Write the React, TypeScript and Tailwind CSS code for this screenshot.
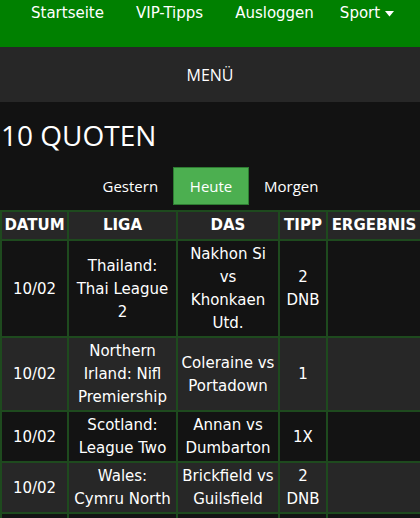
import React from "react";

const rows = [
  { d: "10/02", l: "Thailand: Thai League 2", m: "Nakhon Si vs Khonkaen Utd.", t: "2 DNB", bg: "bg-[#131313]" },
  { d: "10/02", l: "Northern Irland: Nifl Premiership", m: "Coleraine vs Portadown", t: "1", bg: "bg-[#272727]" },
  { d: "10/02", l: "Scotland: League Two", m: "Annan vs Dumbarton", t: "1X", bg: "bg-[#131313]" },
  { d: "10/02", l: "Wales: Cymru North", m: "Brickfield vs Guilsfield", t: "2 DNB", bg: "bg-[#272727]" },
];

export default function App() {
  const dv = { fontFamily: '"DejaVu Sans", Verdana, sans-serif' };
  const os = { fontFamily: '"Open Sans", "Noto Sans", sans-serif' };
  const td = "border-2 border-[#1e4a1e] text-center pt-[2px] pb-[1px] px-[3px]";
  return (
    <div className="w-[420px] h-[518px] overflow-hidden bg-[#121212] text-white">
      <div className="h-[47px] bg-[#008000] flex items-start text-[15px] leading-[20px] pt-[3px]" style={dv}>
        <span className="ml-[31px]">Startseite</span>
        <span className="ml-[32px]">VIP-Tipps</span>
        <span className="ml-[32px]">Ausloggen</span>
        <span className="ml-[26px] flex items-center">
          Sport
          <svg width="9" height="6" viewBox="0 0 9 6" className="ml-[5px] mt-[1px]">
            <path d="M0 0 L9 0 L4.5 5.5 Z" fill="white" />
          </svg>
        </span>
      </div>
      <div className="h-[55px] bg-[#272727] flex items-center justify-center text-[16px]" style={os}>
        MENÜ
      </div>
      <div className="h-[65px] flex items-center pl-[1px] text-[28px]" style={os}>
        10 QUOTEN
      </div>
      <div className="flex justify-center items-center text-[15px] h-[38px] ml-[1px]" style={os}>
        <span className="px-[15px]">Gestern</span>
        <span className="h-[38px] w-[76px] flex items-center justify-center bg-[#4caf50] border border-[#2e7d32]">Heute</span>
        <span className="px-[15px]">Morgen</span>
      </div>
      <table className="mt-[5px] w-[420px] table-fixed border-collapse text-[15px] leading-[23px]" style={dv}>
        <colgroup>
          <col className="w-[67px]" />
          <col className="w-[109px]" />
          <col className="w-[102px]" />
          <col className="w-[48px]" />
          <col className="w-[94px]" />
        </colgroup>
        <thead>
          <tr className="bg-[#272727]">
            {["DATUM", "LIGA", "DAS", "TIPP", "ERGEBNIS"].map((h) => (
              <th key={h} className="border-2 border-[#1e4a1e] font-bold text-[15px] py-[2px] px-0 text-center whitespace-nowrap">
                {h}
              </th>
            ))}
          </tr>
        </thead>
        <tbody>
          {rows.map((r, i) => (
            <tr key={i} className={r.bg}>
              <td className={td}>{r.d}</td>
              <td className={td}>{r.l}</td>
              <td className={td}>{r.m}</td>
              <td className={td}>{r.t}</td>
              <td className={td}></td>
            </tr>
          ))}
          <tr className="bg-[#131313] h-[60px]">
            <td className={td}></td>
            <td className={td}></td>
            <td className={td}></td>
            <td className={td}></td>
            <td className={td}></td>
          </tr>
        </tbody>
      </table>
    </div>
  );
}
